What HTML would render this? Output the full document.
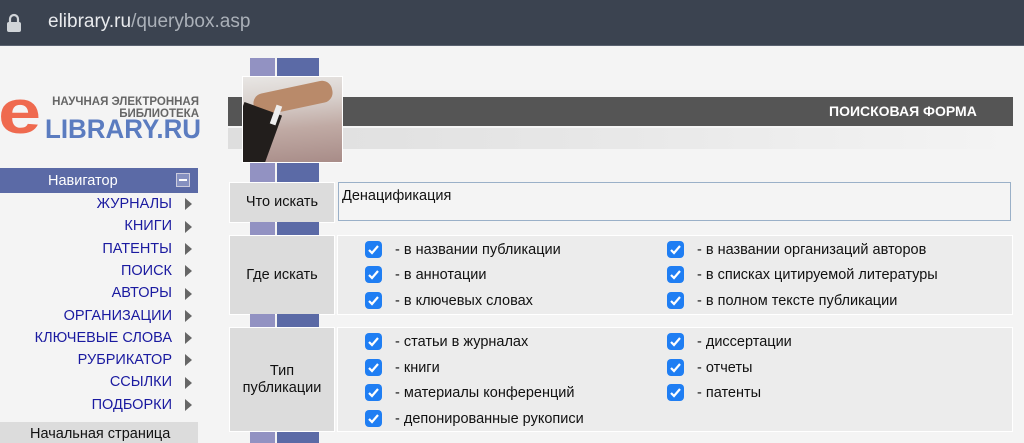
<!DOCTYPE html>
<html><head><meta charset="utf-8"><style>
*{margin:0;padding:0;box-sizing:border-box}
body{width:1024px;height:443px;overflow:hidden;background:#f4f4f4;font-family:"Liberation Sans","DejaVu Sans",sans-serif;position:relative}
.a{position:absolute}
.top{left:0;top:0;width:1024px;height:46px;background:#3b4350;border-bottom:1px solid #5a6270}
.url{left:48px;top:11px;font-size:19px;color:#e8eaed}
.url span{color:#aab0b8}
.nav{right:852px;font-size:14.5px;color:#1a1aa0;text-align:right;white-space:nowrap}
.tri{left:185px;width:0;height:0;border-left:7px solid #666;border-top:6px solid transparent;border-bottom:6px solid transparent}
.sq1{background:#9292c2;width:25px}
.sq2{background:#5b6aa6;width:42px}
.lbl{background:#dcdcdc;border:1px solid #fff;font-size:14.5px;color:#111;display:flex;align-items:center;justify-content:center;text-align:center;line-height:17px}
.cb{width:17px;height:17px;background:#1f7ef3;border-radius:4px}
.cb svg{display:block}
.t{font-size:14.5px;color:#111;white-space:nowrap}
</style></head><body>
<div class="a top"></div>
<svg class="a" style="left:6px;top:13px" width="16" height="20" viewBox="0 0 16 20"><path d="M4 9V6a4 4 0 0 1 8 0v3" fill="none" stroke="#d0d4d8" stroke-width="2.2"/><rect x="1" y="9" width="14" height="10" rx="2" fill="#d0d4d8"/></svg>
<div class="a url">elibrary.ru<span>/querybox.asp</span></div>

<!-- logo -->
<div class="a" style="left:-2px;top:82px;font-size:62px;font-weight:bold;color:#ef6a4f;line-height:62px;transform:scaleX(1.25);transform-origin:left">e</div>
<div class="a" style="left:47px;top:96px;font-size:11.5px;font-weight:bold;color:#666;width:152px;text-align:right;line-height:12px">НАУЧНАЯ ЭЛЕКТРОННАЯ<br>БИБЛИОТЕКА</div>
<div class="a" style="left:45px;top:116px;font-size:27px;font-weight:bold;color:#5b7cc0;line-height:27px;transform:scaleX(0.96);transform-origin:left">LIBRARY.RU</div>

<div class="a" style="left:0;top:168px;width:198px;height:25px;background:#5b6aa6"></div>
<div class="a" style="left:48px;top:173px;font-size:14.5px;color:#fff">Навигатор</div>
<div class="a" style="left:176px;top:173px;width:14px;height:14px;border:1px solid #ccd;background:#8590c0"><div style="margin:5px 2px;height:2px;background:#fff"></div></div>
<div class="a nav" style="top:196px">ЖУРНАЛЫ</div><div class="a tri" style="top:198px"></div>
<div class="a nav" style="top:218px">КНИГИ</div><div class="a tri" style="top:221px"></div>
<div class="a nav" style="top:241px">ПАТЕНТЫ</div><div class="a tri" style="top:243px"></div>
<div class="a nav" style="top:263px">ПОИСК</div><div class="a tri" style="top:265px"></div>
<div class="a nav" style="top:285px">АВТОРЫ</div><div class="a tri" style="top:288px"></div>
<div class="a nav" style="top:308px">ОРГАНИЗАЦИИ</div><div class="a tri" style="top:310px"></div>
<div class="a nav" style="top:330px">КЛЮЧЕВЫЕ СЛОВА</div><div class="a tri" style="top:332px"></div>
<div class="a nav" style="top:352px">РУБРИКАТОР</div><div class="a tri" style="top:354px"></div>
<div class="a nav" style="top:374px">ССЫЛКИ</div><div class="a tri" style="top:377px"></div>
<div class="a nav" style="top:397px">ПОДБОРКИ</div><div class="a tri" style="top:399px"></div>
<div class="a" style="left:0;top:422px;width:198px;height:21px;background:#dcdcdc"></div>
<div class="a" style="left:30px;top:426px;font-size:14.5px;color:#111">Начальная страница</div>

<!-- header -->
<div class="a" style="left:228px;top:97px;width:785px;height:29px;background:#555"></div>
<div class="a" style="left:228px;top:128px;width:785px;height:21px;background:linear-gradient(90deg,#dedede,#e8e8e8 50%,#f4f4f4)"></div>
<div class="a" style="left:829px;top:103px;font-size:14px;font-weight:bold;color:#fff">ПОИСКОВАЯ ФОРМА</div>

<div class="a sq1" style="left:250px;top:58px;height:19px"></div><div class="a sq2" style="left:277px;top:58px;height:19px"></div>
<div class="a" style="left:242px;top:76px;width:101px;height:87px;border:1px solid #fff;background:linear-gradient(175deg,#e8e6e4 0%,#d8d0cc 30%,#c0aaa4 60%,#a88c88 100%);overflow:hidden">
<div class="a" style="left:10px;top:10px;width:80px;height:22px;background:#b98a6a;border-radius:10px;transform:rotate(-12deg)"></div>
<div class="a" style="left:-10px;top:30px;width:40px;height:60px;background:#221e1c;transform:rotate(20deg)"></div>
<div class="a" style="left:30px;top:28px;width:6px;height:20px;background:#eee;transform:rotate(20deg)"></div>
</div>
<div class="a sq1" style="left:250px;top:163px;height:20px"></div><div class="a sq2" style="left:277px;top:163px;height:20px"></div>

<div class="a lbl" style="left:229px;top:182px;width:106px;height:41px">Что искать</div>
<div class="a" style="left:338px;top:182px;width:673px;height:39px;border:1px solid #9ab0c8;background:#f4f4f4"></div>
<div class="a t" style="left:342px;top:188px">Денацификация</div>
<div class="a sq1" style="left:250px;top:222px;height:13px"></div><div class="a sq2" style="left:277px;top:222px;height:13px"></div>

<div class="a lbl" style="left:229px;top:235px;width:106px;height:80px">Где искать</div>
<div class="a" style="left:337px;top:235px;width:676px;height:80px;background:#ececec;border:1px solid #fff"></div>
<div class="a sq1" style="left:250px;top:314px;height:13px"></div><div class="a sq2" style="left:277px;top:314px;height:13px"></div>

<div class="a lbl" style="left:229px;top:327px;width:106px;height:105px">Тип<br>публикации</div>
<div class="a" style="left:337px;top:327px;width:676px;height:105px;background:#ececec;border:1px solid #fff"></div>
<div class="a sq1" style="left:250px;top:432px;height:11px"></div><div class="a sq2" style="left:277px;top:432px;height:11px"></div>

<div class="a cb" style="left:365px;top:241px"><svg width="17" height="17"><path d="M4 9l3 3 6-7" fill="none" stroke="#fff" stroke-width="2.2"/></svg></div><div class="a t" style="left:395px;top:242px">- в названии публикации</div>
<div class="a cb" style="left:365px;top:266px"><svg width="17" height="17"><path d="M4 9l3 3 6-7" fill="none" stroke="#fff" stroke-width="2.2"/></svg></div><div class="a t" style="left:395px;top:267px">- в аннотации</div>
<div class="a cb" style="left:365px;top:292px"><svg width="17" height="17"><path d="M4 9l3 3 6-7" fill="none" stroke="#fff" stroke-width="2.2"/></svg></div><div class="a t" style="left:395px;top:293px">- в ключевых словах</div>
<div class="a cb" style="left:667px;top:241px"><svg width="17" height="17"><path d="M4 9l3 3 6-7" fill="none" stroke="#fff" stroke-width="2.2"/></svg></div><div class="a t" style="left:697px;top:242px">- в названии организаций авторов</div>
<div class="a cb" style="left:667px;top:266px"><svg width="17" height="17"><path d="M4 9l3 3 6-7" fill="none" stroke="#fff" stroke-width="2.2"/></svg></div><div class="a t" style="left:697px;top:267px">- в списках цитируемой литературы</div>
<div class="a cb" style="left:667px;top:292px"><svg width="17" height="17"><path d="M4 9l3 3 6-7" fill="none" stroke="#fff" stroke-width="2.2"/></svg></div><div class="a t" style="left:697px;top:293px">- в полном тексте публикации</div>

<div class="a cb" style="left:365px;top:333px"><svg width="17" height="17"><path d="M4 9l3 3 6-7" fill="none" stroke="#fff" stroke-width="2.2"/></svg></div><div class="a t" style="left:395px;top:334px">- статьи в журналах</div>
<div class="a cb" style="left:365px;top:359px"><svg width="17" height="17"><path d="M4 9l3 3 6-7" fill="none" stroke="#fff" stroke-width="2.2"/></svg></div><div class="a t" style="left:395px;top:360px">- книги</div>
<div class="a cb" style="left:365px;top:384px"><svg width="17" height="17"><path d="M4 9l3 3 6-7" fill="none" stroke="#fff" stroke-width="2.2"/></svg></div><div class="a t" style="left:395px;top:385px">- материалы конференций</div>
<div class="a cb" style="left:365px;top:410px"><svg width="17" height="17"><path d="M4 9l3 3 6-7" fill="none" stroke="#fff" stroke-width="2.2"/></svg></div><div class="a t" style="left:395px;top:411px">- депонированные рукописи</div>
<div class="a cb" style="left:667px;top:333px"><svg width="17" height="17"><path d="M4 9l3 3 6-7" fill="none" stroke="#fff" stroke-width="2.2"/></svg></div><div class="a t" style="left:697px;top:334px">- диссертации</div>
<div class="a cb" style="left:667px;top:359px"><svg width="17" height="17"><path d="M4 9l3 3 6-7" fill="none" stroke="#fff" stroke-width="2.2"/></svg></div><div class="a t" style="left:697px;top:360px">- отчеты</div>
<div class="a cb" style="left:667px;top:384px"><svg width="17" height="17"><path d="M4 9l3 3 6-7" fill="none" stroke="#fff" stroke-width="2.2"/></svg></div><div class="a t" style="left:697px;top:385px">- патенты</div>
</body></html>
